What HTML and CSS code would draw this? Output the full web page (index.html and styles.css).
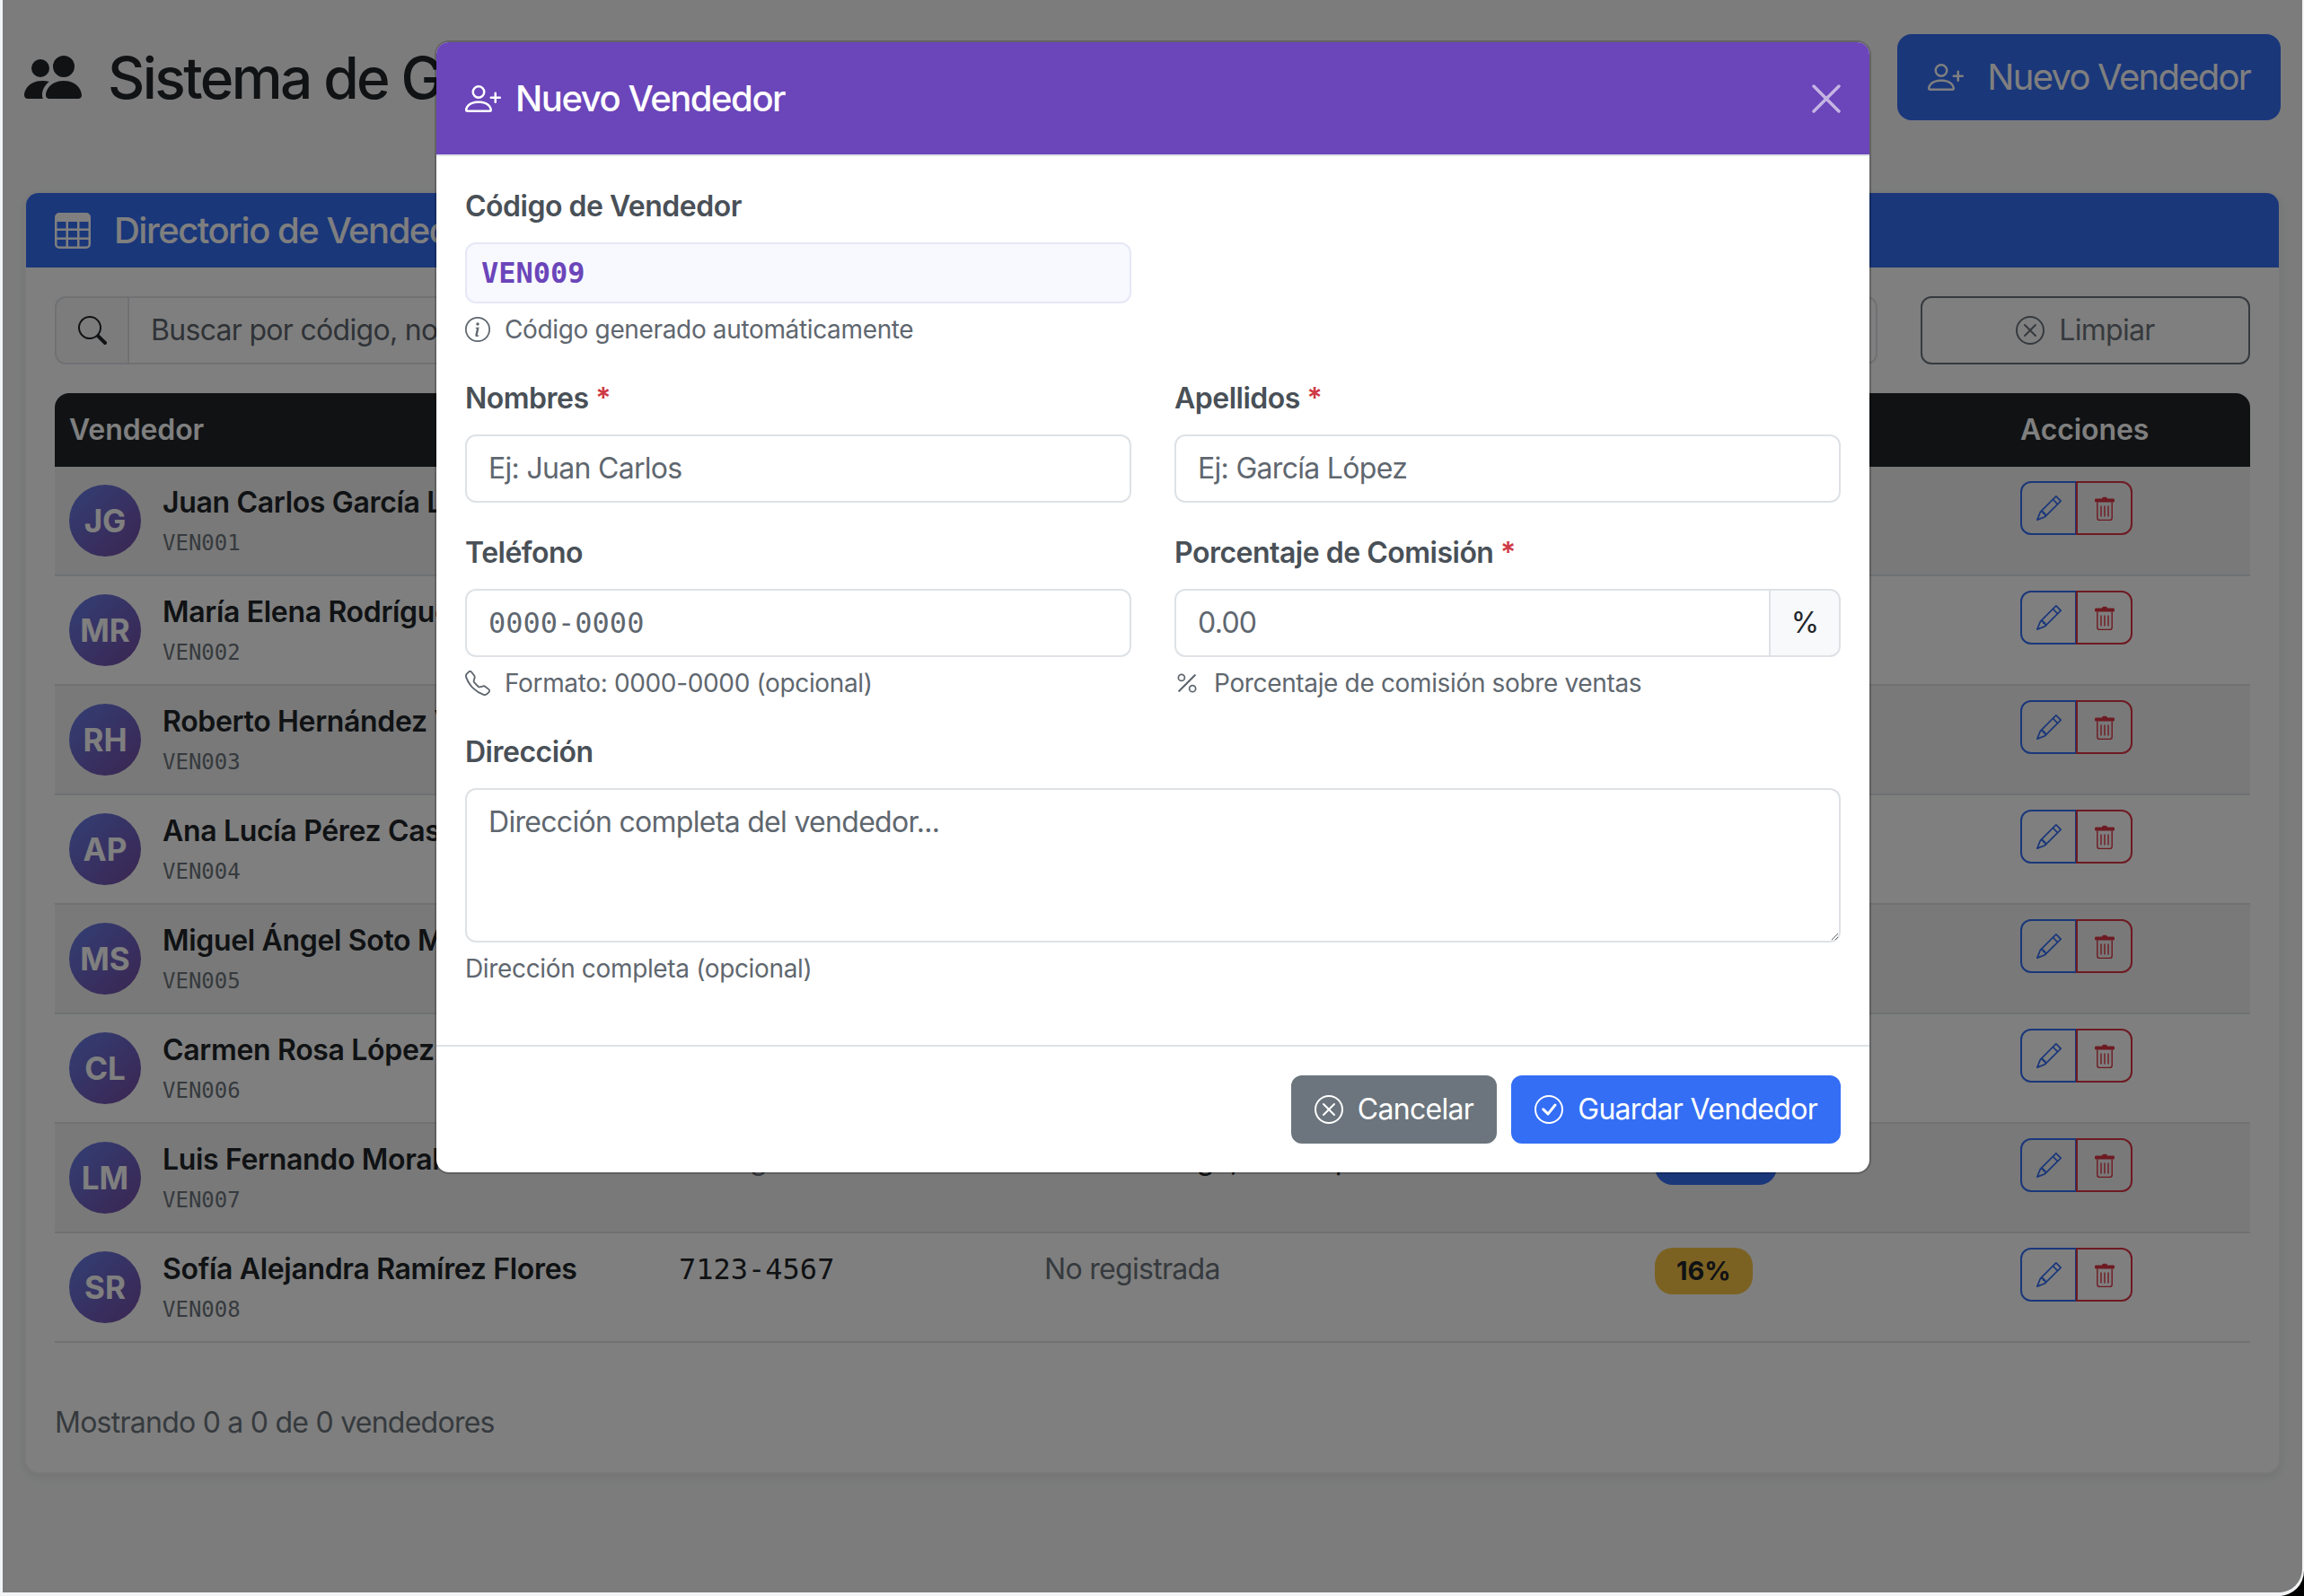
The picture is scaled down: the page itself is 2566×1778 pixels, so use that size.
FILE: index.html
```html
<!DOCTYPE html>
<html lang="es">
<head>
    <meta charset="UTF-8">
    <meta name="viewport" content="width=device-width, initial-scale=1.0">
    <title>Sistema de Gestión de Vendedores</title>
    <link rel="stylesheet" href="styles.css">
</head>
<body>
    <!-- icon sprite -->
    <svg class="sprite" xmlns="http://www.w3.org/2000/svg">
        <symbol id="i-people" viewBox="0 0 16 16"><path d="M7 14s-1 0-1-1 1-4 5-4 5 3 5 4-1 1-1 1zm4-6a3 3 0 1 0 0-6 3 3 0 0 0 0 6m-5.784 6A2.24 2.24 0 0 1 5 13c0-1.355.68-2.75 1.936-3.72A6.3 6.3 0 0 0 5 9c-4 0-5 3-5 4s1 1 1 1zM4.500 8a2.500 2.500 0 1 0 0-5 2.500 2.500 0 0 0 0 5"/></symbol>
        <symbol id="i-person-plus" viewBox="0 0 16 16"><path d="M6 8a3 3 0 1 0 0-6 3 3 0 0 0 0 6m2-3a2 2 0 1 1-4 0 2 2 0 0 1 4 0m4 8c0 1-1 1-1 1H1s-1 0-1-1 1-4 6-4 6 3 6 4m-1-.004c-.001-.246-.154-.986-.832-1.664C9.516 10.68 8.289 10 6 10c-2.29 0-3.516.68-4.168 1.332-.678.678-.83 1.418-.832 1.664z"/><path fill-rule="evenodd" d="M13.5 5a.5.5 0 0 1 .5.5V7h1.5a.5.5 0 0 1 0 1H14v1.5a.5.5 0 0 1-1 0V8h-1.5a.5.5 0 0 1 0-1H13V5.500a.5.5 0 0 1 .5-.5"/></symbol>
        <symbol id="i-table" viewBox="0 0 16 16"><path d="M0 2a2 2 0 0 1 2-2h12a2 2 0 0 1 2 2v12a2 2 0 0 1-2 2H2a2 2 0 0 1-2-2zm15 2h-4v3h4zm0 4h-4v3h4zm0 4h-4v3h3a1 1 0 0 0 1-1zm-5 3v-3H6v3zm-5 0v-3H1v2a1 1 0 0 0 1 1zm-4-4h4V8H1zm0-4h4V4H1zm5-3v3h4V4zm4 4H6v3h4z"/></symbol>
        <symbol id="i-search" viewBox="0 0 16 16"><path d="M11.742 10.344a6.5 6.5 0 1 0-1.397 1.398h-.001q.044.06.098.115l3.85 3.85a1 1 0 0 0 1.415-1.414l-3.85-3.85a1 1 0 0 0-.115-.1zM12 6.5a5.5 5.5 0 1 1-11 0 5.5 5.5 0 0 1 11 0"/></symbol>
        <symbol id="i-x-circle" viewBox="0 0 16 16"><path d="M8 15A7 7 0 1 1 8 1a7 7 0 0 1 0 14m0 1A8 8 0 1 0 8 0a8 8 0 0 0 0 16"/><path d="M4.646 4.646a.5.5 0 0 1 .708 0L8 7.293l2.646-2.647a.5.5 0 0 1 .708.708L8.707 8l2.647 2.646a.5.5 0 0 1-.708.708L8 8.707l-2.646 2.647a.5.5 0 0 1-.708-.708L7.293 8 4.646 5.354a.5.5 0 0 1 0-.708"/></symbol>
        <symbol id="i-check-circle" viewBox="0 0 16 16"><path d="M8 15A7 7 0 1 1 8 1a7 7 0 0 1 0 14m0 1A8 8 0 1 0 8 0a8 8 0 0 0 0 16"/><path d="m10.97 4.97-.02.022-3.473 4.425-2.093-2.094a.75.75 0 0 0-1.06 1.06L6.97 11.03a.75.75 0 0 0 1.079-.02l3.992-4.99a.75.75 0 0 0-1.071-1.05"/></symbol>
        <symbol id="i-info" viewBox="0 0 16 16"><path d="M8 15A7 7 0 1 1 8 1a7 7 0 0 1 0 14m0 1A8 8 0 1 0 8 0a8 8 0 0 0 0 16"/><path d="m8.93 6.588-2.29.287-.082.38.45.083c.294.07.352.176.288.469l-.738 3.468c-.194.897.105 1.319.808 1.319.545 0 1.178-.252 1.465-.598l.088-.416c-.2.176-.492.246-.686.246-.275 0-.375-.193-.304-.533zM9 4.5a1 1 0 1 1-2 0 1 1 0 0 1 2 0"/></symbol>
        <symbol id="i-phone" viewBox="0 0 16 16"><path d="M3.654 1.328a.678.678 0 0 0-1.015-.063L1.605 2.3c-.483.484-.661 1.169-.45 1.77a17.6 17.6 0 0 0 4.168 6.608 17.6 17.6 0 0 0 6.608 4.168c.601.211 1.286.033 1.77-.45l1.034-1.034a.678.678 0 0 0-.063-1.015l-2.307-1.794a.68.68 0 0 0-.58-.122l-2.19.547a1.75 1.75 0 0 1-1.657-.459L5.482 8.062a1.75 1.75 0 0 1-.46-1.657l.548-2.19a.68.68 0 0 0-.122-.58zM1.884.511a1.745 1.745 0 0 1 2.612.163L6.29 2.98c.329.423.445.974.315 1.494l-.547 2.19a.68.68 0 0 0 .178.643l2.457 2.457a.68.68 0 0 0 .644.178l2.189-.547a1.75 1.75 0 0 1 1.494.315l2.306 1.794c.829.645.905 1.87.163 2.611l-1.034 1.034c-.74.74-1.846 1.065-2.877.702a18.6 18.6 0 0 1-7.01-4.42 18.6 18.6 0 0 1-4.42-7.009c-.362-1.03-.037-2.137.703-2.877z"/></symbol>
        <symbol id="i-percent" viewBox="0 0 16 16"><path d="M13.442 2.558a.625.625 0 0 1 0 .884l-10 10a.625.625 0 1 1-.884-.884l10-10a.625.625 0 0 1 .884 0M4.5 6a1.5 1.5 0 1 1 0-3 1.5 1.5 0 0 1 0 3m0 1a2.5 2.5 0 1 0 0-5 2.5 2.5 0 0 0 0 5m7 6a1.5 1.5 0 1 1 0-3 1.5 1.5 0 0 1 0 3m0 1a2.5 2.5 0 1 0 0-5 2.5 2.5 0 0 0 0 5"/></symbol>
        <symbol id="i-pencil" viewBox="0 0 16 16"><path d="M12.146.146a.5.5 0 0 1 .708 0l3 3a.5.5 0 0 1 0 .708l-10 10a.5.5 0 0 1-.168.11l-5 2a.5.5 0 0 1-.65-.65l2-5a.5.5 0 0 1 .11-.168zM11.207 2.5 13.5 4.793 14.793 3.5 12.5 1.207zm1.586 3L10.5 3.207 4 9.707V10h.5a.5.5 0 0 1 .5.5v.5h.5a.5.5 0 0 1 .5.5v.5h.293zm-9.761 5.175-.106.106-1.528 3.821 3.821-1.528.106-.106A.5.5 0 0 1 5 12.5V12h-.5a.5.5 0 0 1-.5-.5V11h-.5a.5.5 0 0 1-.468-.325"/></symbol>
        <symbol id="i-trash" viewBox="0 0 24 27"><path d="M9 2.500C9 1.400 10 .8 12 .8s3 .6 3 1.700h6.500c1 0 1.500.6 1.500 1.500v1c0 .9-.5 1.500-1.500 1.500h-19C1.500 6.500 1 5.900 1 5V4c0-.9.5-1.500 1.500-1.500z"/><path fill="none" stroke="currentColor" stroke-width="1.400" d="M3.800 6.500v17.500c0 1.600 1 2.500 2.500 2.500h11.400c1.500 0 2.500-.9 2.500-2.500V6.500"/><path fill="none" stroke="currentColor" stroke-width="1.400" d="M8 10.500v12M12 10.500v12M16 10.500v12"/></symbol>
    </svg>

    <div class="window">
        <div class="viewport">
            <main class="page">
                <header class="page-head">
                    <h1 class="page-title"><svg class="ico ico-title"><use href="#i-people"/></svg>Sistema de Gestión de Vendedores</h1>
                    <button class="btn btn-lg btn-primary"><svg class="ico ico-40"><use href="#i-person-plus"/></svg>Nuevo Vendedor</button>
                </header>

                <section class="card">
                    <div class="card-head">
                        <svg class="ico ico-40"><use href="#i-table"/></svg>
                        <h2>Directorio de Vendedores</h2>
                    </div>
                    <div class="card-body">
                        <div class="search-row">
                            <div class="input-group">
                                <span class="addon addon-search"><svg class="ico ico-32"><use href="#i-search"/></svg></span>
                                <input class="control" type="text" placeholder="Buscar por código, nombre, teléfono o dirección...">
                            </div>
                            <button class="btn btn-outline"><svg class="ico ico-32"><use href="#i-x-circle"/></svg>Limpiar</button>
                        </div>

                        <div class="table-wrap">
                            <table class="sellers">
                                <colgroup>
                                    <col class="col-seller">
                                    <col class="col-phone">
                                    <col class="col-address">
                                    <col class="col-rate">
                                    <col class="col-actions">
                                </colgroup>
                                <thead>
                                    <tr>
                                        <th>Vendedor</th>
                                        <th>Teléfono</th>
                                        <th>Dirección</th>
                                        <th>Comisión</th>
                                        <th>Acciones</th>
                                    </tr>
                                </thead>
                                <tbody>
                                    <tr>
                                        <td><div class="seller"><span class="avatar">JG</span><div><div class="name">Juan Carlos García López</div><div class="code">VEN001</div></div></div></td>
                                        <td class="mono">7012-3456</td>
                                        <td>Zona 1, Ciudad de Guatemala</td>
                                        <td><span class="badge badge-green">15%</span></td>
                                        <td><div class="actions"><button class="act act-edit"><svg class="ico ico-28"><use href="#i-pencil"/></svg></button><button class="act act-del"><svg class="ico ico-trash"><use href="#i-trash"/></svg></button></div></td>
                                    </tr>
                                    <tr>
                                        <td><div class="seller"><span class="avatar">MR</span><div><div class="name">María Elena Rodríguez Díaz</div><div class="code">VEN002</div></div></div></td>
                                        <td class="mono">7023-4567</td>
                                        <td>Zona 10, Ciudad de Guatemala</td>
                                        <td><span class="badge badge-green">14%</span></td>
                                        <td><div class="actions"><button class="act act-edit"><svg class="ico ico-28"><use href="#i-pencil"/></svg></button><button class="act act-del"><svg class="ico ico-trash"><use href="#i-trash"/></svg></button></div></td>
                                    </tr>
                                    <tr>
                                        <td><div class="seller"><span class="avatar">RH</span><div><div class="name">Roberto Hernández Vega</div><div class="code">VEN003</div></div></div></td>
                                        <td class="mono">7034-5678</td>
                                        <td>Mixco, Guatemala</td>
                                        <td><span class="badge badge-blue">12.5%</span></td>
                                        <td><div class="actions"><button class="act act-edit"><svg class="ico ico-28"><use href="#i-pencil"/></svg></button><button class="act act-del"><svg class="ico ico-trash"><use href="#i-trash"/></svg></button></div></td>
                                    </tr>
                                    <tr>
                                        <td><div class="seller"><span class="avatar">AP</span><div><div class="name">Ana Lucía Pérez Castro</div><div class="code">VEN004</div></div></div></td>
                                        <td class="mono">7045-6789</td>
                                        <td>Villa Nueva, Guatemala</td>
                                        <td><span class="badge badge-yellow">16%</span></td>
                                        <td><div class="actions"><button class="act act-edit"><svg class="ico ico-28"><use href="#i-pencil"/></svg></button><button class="act act-del"><svg class="ico ico-trash"><use href="#i-trash"/></svg></button></div></td>
                                    </tr>
                                    <tr>
                                        <td><div class="seller"><span class="avatar">MS</span><div><div class="name">Miguel Ángel Soto Méndez</div><div class="code">VEN005</div></div></div></td>
                                        <td class="mono">7056-7890</td>
                                        <td>Antigua Guatemala</td>
                                        <td><span class="badge badge-blue">12.5%</span></td>
                                        <td><div class="actions"><button class="act act-edit"><svg class="ico ico-28"><use href="#i-pencil"/></svg></button><button class="act act-del"><svg class="ico ico-trash"><use href="#i-trash"/></svg></button></div></td>
                                    </tr>
                                    <tr>
                                        <td><div class="seller"><span class="avatar">CL</span><div><div class="name">Carmen Rosa López Ruiz</div><div class="code">VEN006</div></div></div></td>
                                        <td class="mono">7067-8901</td>
                                        <td>Zona 5, Ciudad de Guatemala</td>
                                        <td><span class="badge badge-green">14%</span></td>
                                        <td><div class="actions"><button class="act act-edit"><svg class="ico ico-28"><use href="#i-pencil"/></svg></button><button class="act act-del"><svg class="ico ico-trash"><use href="#i-trash"/></svg></button></div></td>
                                    </tr>
                                    <tr>
                                        <td><div class="seller"><span class="avatar">LM</span><div><div class="name">Luis Fernando Morales Paz</div><div class="code">VEN007</div></div></div></td>
                                        <td class="muted">No registrado</td>
                                        <td>Calle Santiago, Col. Esperanza</td>
                                        <td><span class="badge badge-blue">12.5%</span></td>
                                        <td><div class="actions"><button class="act act-edit"><svg class="ico ico-28"><use href="#i-pencil"/></svg></button><button class="act act-del"><svg class="ico ico-trash"><use href="#i-trash"/></svg></button></div></td>
                                    </tr>
                                    <tr>
                                        <td><div class="seller"><span class="avatar">SR</span><div><div class="name">Sofía Alejandra Ramírez Flores</div><div class="code">VEN008</div></div></div></td>
                                        <td class="mono">7123-4567</td>
                                        <td class="muted">No registrada</td>
                                        <td><span class="badge badge-yellow">16%</span></td>
                                        <td><div class="actions"><button class="act act-edit"><svg class="ico ico-28"><use href="#i-pencil"/></svg></button><button class="act act-del"><svg class="ico ico-trash"><use href="#i-trash"/></svg></button></div></td>
                                    </tr>
                                </tbody>
                            </table>
                        </div>

                        <p class="table-info">Mostrando 0 a 0 de 0 vendedores</p>
                    </div>
                </section>
            </main>

            <div class="overlay">
                <div class="modal">
                    <div class="modal-head">
                        <h3 class="modal-title"><svg class="ico ico-40"><use href="#i-person-plus"/></svg>Nuevo Vendedor</h3>
                        <button class="close" aria-label="Cerrar">
                            <svg viewBox="0 0 32 32"><path d="M2 2l28 28M30 2L2 30"/></svg>
                        </button>
                    </div>
                    <form class="modal-body">
                        <div class="form-row">
                            <div class="field">
                                <label>Código de Vendedor</label>
                                <input class="control control-code" type="text" value="VEN009" readonly>
                                <div class="help"><svg class="ico ico-28"><use href="#i-info"/></svg>Código generado automáticamente</div>
                            </div>
                        </div>
                        <div class="form-row">
                            <div class="field">
                                <label>Nombres <span class="req">*</span></label>
                                <input class="control" type="text" placeholder="Ej: Juan Carlos">
                            </div>
                            <div class="field">
                                <label>Apellidos <span class="req">*</span></label>
                                <input class="control" type="text" placeholder="Ej: García López">
                            </div>
                        </div>
                        <div class="form-row">
                            <div class="field">
                                <label>Teléfono</label>
                                <input class="control control-mono" type="text" placeholder="0000-0000">
                                <div class="help"><svg class="ico ico-28"><use href="#i-phone"/></svg>Formato: 0000-0000 (opcional)</div>
                            </div>
                            <div class="field">
                                <label>Porcentaje de Comisión <span class="req">*</span></label>
                                <div class="input-group">
                                    <input class="control" type="text" placeholder="0.00">
                                    <span class="addon addon-percent">%</span>
                                </div>
                                <div class="help"><svg class="ico ico-28"><use href="#i-percent"/></svg>Porcentaje de comisión sobre ventas</div>
                            </div>
                        </div>
                        <div class="field">
                            <label>Dirección</label>
                            <textarea class="control" rows="3" placeholder="Dirección completa del vendedor..."></textarea>
                            <div class="help">Dirección completa (opcional)</div>
                        </div>
                    </form>
                    <div class="modal-foot">
                        <button class="btn btn-secondary"><svg class="ico ico-32"><use href="#i-x-circle"/></svg>Cancelar</button>
                        <button class="btn btn-primary"><svg class="ico ico-32"><use href="#i-check-circle"/></svg>Guardar Vendedor</button>
                    </div>
                </div>
            </div>
        </div>
    </div>
</body>
</html>
```

FILE: styles.css
```css
* {
    box-sizing: border-box;
}
html, body {
    height: 100%;
}
body {
    margin: 0;
    background: #000;
    font-family: Inter, "Noto Sans", sans-serif;
    font-size: 32px;
    line-height: 48px;
    letter-spacing: -0.7px;
    color: #212529;
    overflow: hidden;
}
button, input, textarea {
    font: inherit;
    letter-spacing: inherit;
}
.sprite {
    display: none;
}
.ico {
    display: block;
    flex: none;
    fill: currentColor;
}
.ico-28 { width: 28px; height: 28px; }
.ico-32 { width: 32px; height: 32px; }
.ico-40 { width: 40px; height: 40px; }
.ico-title { width: 64px; height: 64px; }
.ico-trash { width: 24px; height: 27px; }

/* browser frame */
.window {
    height: 100%;
    padding: 0 2px 4px 3px;
    background: #f3f4f6;
    border-bottom-right-radius: 28px;
}
.viewport {
    position: relative;
    height: 100%;
    overflow: hidden;
    background: #f8f9fa;
    border-bottom-right-radius: 26px;
}

/* page under the modal */
.page {
    padding: 38px 24px 0 24px;
}
.page-head {
    display: flex;
    align-items: center;
    justify-content: space-between;
    margin-bottom: 79px;
}
.page-title {
    display: flex;
    align-items: center;
    gap: 29px;
    margin: 0;
    padding-top: 2px;
    font-size: 64px;
    line-height: 94px;
    font-weight: 500;
    letter-spacing: -2.6px;
}
.page-title .ico {
    margin-top: -2px;
}
.btn {
    display: inline-flex;
    align-items: center;
    justify-content: center;
    gap: 16px;
    height: 76px;
    padding: 0 24px;
    border: 2px solid transparent;
    border-radius: 12px;
    color: #fff;
    cursor: pointer;
}
.btn-lg {
    gap: 26px;
    height: 96px;
    padding: 0 32px;
    font-size: 40px;
    letter-spacing: -1.75px;
    border-radius: 16px;
}
.btn-primary {
    background: #346ef5;
    border-color: #346ef5;
}
.btn-secondary {
    background: #6c757d;
    border-color: #6c757d;
}
.btn-outline {
    background: transparent;
    border-color: #6c757d;
    color: #6c757d;
}
.card {
    background: #fff;
    border: 2px solid rgba(0, 0, 0, 0.05);
    border-radius: 16px;
    box-shadow: 0 4px 12px rgba(0, 0, 0, 0.08);
    overflow: hidden;
}
.card-head {
    display: flex;
    align-items: center;
    gap: 26px;
    height: 83px;
    padding: 0 32px;
    background: #346ef5;
    color: #fff;
}
.card-head h2 {
    margin: 0;
    font-size: 40px;
    line-height: 60px;
    font-weight: 500;
    letter-spacing: -1.5px;
}
.card-body {
    padding: 32px 32px 31px;
}
.search-row {
    display: grid;
    grid-template-columns: 1fr 367px;
    gap: 48px;
    margin-bottom: 32px;
}
.input-group {
    display: flex;
}
.input-group .control:first-child {
    border-radius: 12px 0 0 12px;
}
.control {
    display: block;
    width: 100%;
    min-width: 0;
    padding: 12px 24px;
    background: #fff;
    border: 2px solid #dee2e6;
    border-radius: 12px;
    font-size: 32px;
    line-height: 48px;
    color: #212529;
    outline: none;
}
.control::placeholder {
    color: #5f676f;
    opacity: 1;
}
.addon {
    display: flex;
    align-items: center;
    justify-content: center;
    flex: none;
    background: #f8f9fa;
    border: 2px solid #dee2e6;
}
.addon-search {
    width: 83px;
    border-radius: 12px 0 0 12px;
}
.addon-search + .control {
    border-left: 0;
    border-radius: 0 12px 12px 0;
}
.addon-percent {
    width: 80px;
    border-radius: 0 12px 12px 0;
    margin-left: -2px;
}
.table-wrap {
    border-radius: 16px 16px 0 0;
    overflow: hidden;
}
.sellers {
    width: 100%;
    table-layout: fixed;
    border-collapse: separate;
    border-spacing: 0;
}
.col-seller { width: 679px; }
.col-phone { width: 407px; }
.col-address { width: 680px; }
.col-rate { width: 407px; }
.col-actions { width: 273px; }
.sellers th {
    height: 82px;
    padding: 16px;
    background: #212529;
    color: #fff;
    text-align: left;
    font-weight: 600;
    letter-spacing: -0.1px;
}
.sellers td {
    height: 122px;
    padding: 16px;
    vertical-align: top;
    border-bottom: 2px solid #dee2e6;
    white-space: nowrap;
}
.sellers tbody tr:nth-child(odd) td {
    background: rgba(0, 0, 0, 0.05);
}
.seller {
    display: flex;
    align-items: center;
    gap: 24px;
    height: 88px;
}
.avatar {
    display: flex;
    align-items: center;
    justify-content: center;
    flex: none;
    width: 80px;
    height: 80px;
    border-radius: 50%;
    background: linear-gradient(135deg, #667eea, #764ba2);
    color: #fff;
    font-size: 35px;
    font-weight: 700;
    letter-spacing: 0;
}
.name {
    font-weight: 600;
    letter-spacing: -0.33px;
}
.code {
    padding-top: 1px;
    font-family: "DejaVu Sans Mono", "Liberation Mono", monospace;
    font-size: 24px;
    line-height: 40px;
    letter-spacing: 0;
    color: #6c757d;
}
.sellers .mono {
    font-family: "DejaVu Sans Mono", "Liberation Mono", monospace;
    letter-spacing: 0;
}
.sellers .muted {
    color: #6c757d;
}
.badge {
    display: inline-block;
    padding: 0 24px;
    border-radius: 20px;
    font-size: 29px;
    line-height: 52px;
    font-weight: 700;
    letter-spacing: 0;
    vertical-align: top;
}
.badge-yellow {
    background: #f8c445;
    color: #212529;
}
.badge-blue {
    background: #346ef5;
    color: #fff;
}
.badge-green {
    background: #198754;
    color: #fff;
}
.actions {
    display: flex;
}
.act {
    display: flex;
    align-items: center;
    justify-content: center;
    width: 63px;
    height: 60px;
    padding: 0;
    background: transparent;
    border: 2px solid;
    cursor: pointer;
}
.act-edit {
    color: #346ef5;
    border-radius: 12px 0 0 12px;
}
.act-del {
    color: #dc3545;
    margin-left: -1px;
    border-radius: 0 12px 12px 0;
}
.table-info {
    margin: 65px 0 0;
    letter-spacing: -0.75px;
    color: #6c757d;
}

/* modal */
.overlay {
    position: absolute;
    inset: 0;
    padding: 45px 0 0 1px;
    background: rgba(0, 0, 0, 0.5);
}
.modal {
    width: 1600px;
    margin: 0 auto;
    background: #fff;
    border: 2px solid rgba(0, 0, 0, 0.2);
    border-radius: 16px;
    background-clip: padding-box;
    overflow: hidden;
}
.modal-head {
    display: flex;
    align-items: center;
    justify-content: space-between;
    height: 127px;
    padding: 0 32px;
    background: #6b45ba;
    border-bottom: 2px solid #dee2e6;
    color: #fff;
}
.modal-title {
    display: flex;
    align-items: center;
    gap: 16px;
    margin: 0;
    font-size: 40px;
    line-height: 60px;
    font-weight: 500;
    letter-spacing: -1.45px;
}
.close {
    width: 32px;
    height: 32px;
    padding: 0;
    background: none;
    border: 0;
    opacity: 0.6;
    cursor: pointer;
}
.close svg {
    display: block;
    stroke: #fff;
    stroke-width: 3.5;
    stroke-linecap: round;
}
.modal-body {
    padding: 32px;
}
.form-row {
    display: grid;
    grid-template-columns: 1fr 1fr;
    gap: 48px;
}
.field {
    margin-bottom: 32px;
}
.field label {
    display: block;
    margin-bottom: 16px;
    font-weight: 600;
    letter-spacing: -0.5px;
    color: #495057;
}
.req {
    color: #cf3a46;
}
.control-code {
    padding: 8px 16px;
    background: #f8f9ff;
    border-color: #e6e8f5;
    font-family: "DejaVu Sans Mono", "Liberation Mono", monospace;
    font-weight: 700;
    letter-spacing: 0;
    color: #6b45ba;
}
.control-mono {
    font-family: "DejaVu Sans Mono", "Liberation Mono", monospace;
    letter-spacing: 0;
}
textarea.control {
    resize: vertical;
    height: 172px;
}
.help {
    display: flex;
    align-items: center;
    gap: 16px;
    margin-top: 8px;
    font-size: 28px;
    line-height: 42px;
    letter-spacing: -0.35px;
    color: #5f676f;
}
.modal-foot {
    display: flex;
    justify-content: flex-end;
    gap: 16px;
    padding: 32px;
    border-top: 2px solid #dee2e6;
}
```
